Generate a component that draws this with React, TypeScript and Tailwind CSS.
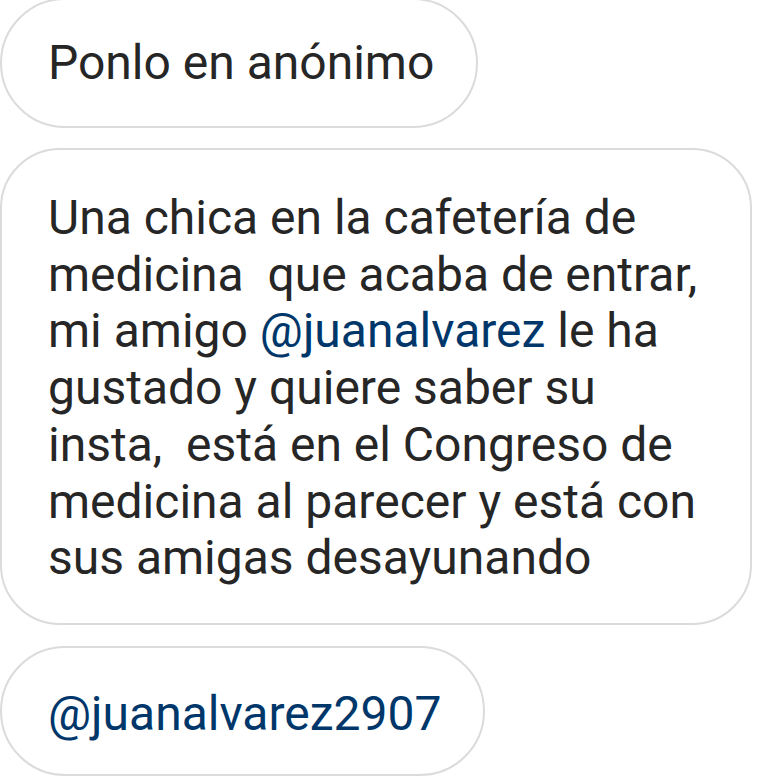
const lines: { text: string; mention?: string; after?: string }[] = [
  { text: "Una chica en la cafetería de" },
  { text: "medicina  que acaba de entrar," },
  { text: "mi amigo ", mention: "@juanalvarez", after: " le ha" },
  { text: "gustado y quiere saber su" },
  { text: "insta,  está en el Congreso de" },
  { text: "medicina al parecer y está con" },
  { text: "sus amigas desayunando" },
];

const App = () => {
  return (
    <div className="h-[779px] w-[779px] overflow-hidden bg-white font-['Roboto',sans-serif] text-[#262626]">
      <div className="flex flex-col items-start">
        <div className="-mt-[2px] flex h-[130px] items-center rounded-full border-2 border-[#dbdbdb] pl-[46px] pr-[42px] text-[48px] leading-none">
          Ponlo en anónimo
        </div>
        <div className="mt-[20px] flex h-[477px] w-[752px] flex-col justify-center rounded-[60px] border-2 border-[#dbdbdb] px-[46px] pt-[4px] text-[48px] leading-[56.7px]">
          {lines.map((l, i) => (
            <div key={i} className="whitespace-pre">
              {l.text}
              {l.mention && <span className="text-[#00376b]">{l.mention}</span>}
              {l.after}
            </div>
          ))}
        </div>
        <div className="mt-[21px] flex h-[130px] items-center rounded-full border-2 border-[#dbdbdb] pl-[46px] pr-[42px] pt-[6px] text-[48px] leading-none text-[#00376b]">
          @juanalvarez2907
        </div>
      </div>
    </div>
  );
};

export default App;
